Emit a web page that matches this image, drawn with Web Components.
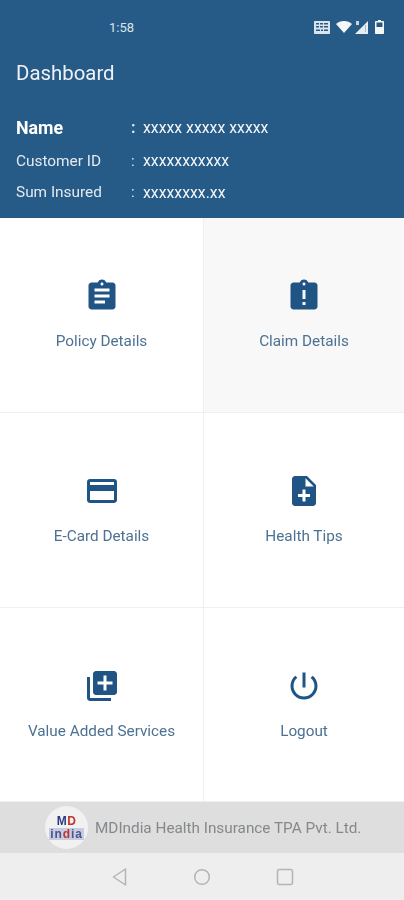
<!DOCTYPE html>
<html>
<head>
<meta charset="utf-8">
<title>Dashboard</title>
<style>
  html, body { margin: 0; padding: 0; height: 100%; overflow: hidden; }
  body { font-family: Roboto, "Liberation Sans", sans-serif; background: #fff; }
</style>
</head>
<body>
<app-screen>
  <app-header slot="top">
    <info-row label="Name" value="xxxxx xxxxx xxxxx" main></info-row>
    <info-row label="Customer ID" value="xxxxxxxxxxx"></info-row>
    <info-row label="Sum Insured" value="xxxxxxxx.xx"></info-row>
  </app-header>
  <dash-tile label="Policy Details" icon="policy"></dash-tile>
  <dash-tile label="Claim Details" icon="claim" active></dash-tile>
  <dash-tile label="E-Card Details" icon="card"></dash-tile>
  <dash-tile label="Health Tips" icon="tips"></dash-tile>
  <dash-tile label="Value Added Services" icon="services"></dash-tile>
  <dash-tile label="Logout" icon="logout"></dash-tile>
  <app-footer slot="bottom">MDIndia Health Insurance TPA Pvt. Ltd.</app-footer>
  <nav-bar slot="bottom"></nav-bar>
</app-screen>

<script>
const ICONS = {
  policy: 'M19 3h-4.18C14.4 1.84 13.3 1 12 1c-1.3 0-2.4.84-2.82 2H5c-1.1 0-2 .9-2 2v14c0 1.1.9 2 2 2h14c1.1 0 2-.9 2-2V5c0-1.1-.9-2-2-2zm-7 0c.55 0 1 .45 1 1s-.45 1-1 1-1-.45-1-1 .45-1 1-1zm2 14H7v-2h7v2zm3-4H7v-2h10v2zm0-4H7V7h10v2z',
  claim: 'M19 3h-4.18C14.4 1.84 13.3 1 12 1c-1.3 0-2.4.84-2.82 2H5c-1.1 0-2 .9-2 2v14c0 1.1.9 2 2 2h14c1.1 0 2-.9 2-2V5c0-1.1-.9-2-2-2zm-6 15h-2v-2h2v2zm0-4h-2V8h2v6zm-1-9c-.55 0-1-.45-1-1s.45-1 1-1 1 .45 1 1-.45 1-1 1z',
  card: 'M20 4H4c-1.11 0-1.99.89-1.99 2L2 18c0 1.11.89 2 2 2h16c1.11 0 2-.89 2-2V6c0-1.11-.89-2-2-2zm0 14H4v-6h16v6zm0-10H4V6h16v2z',
  tips: 'M14 2H6c-1.1 0-1.99.9-1.99 2L4 20c0 1.1.89 2 1.99 2H18c1.1 0 2-.9 2-2V8l-6-6zm2 14h-3v3h-2v-3H8v-2h3v-3h2v3h3v2zm-3-7V3.5L18.5 9H13z',
  services: 'M4 6H2v14c0 1.1.9 2 2 2h14v-2H4V6zm16-4H8c-1.1 0-2 .9-2 2v12c0 1.1.9 2 2 2h12c1.1 0 2-.9 2-2V4c0-1.1-.9-2-2-2zm-1 9h-4v4h-2v-4H9V9h4V5h2v4h4v2z',
  logout: 'M13 3h-2v10h2V3zm4.83 2.17l-1.42 1.42C17.99 7.86 19 9.81 19 12c0 3.87-3.13 7-7 7s-7-3.13-7-7c0-2.19 1.01-4.14 2.58-5.42L6.17 5.17C4.23 6.82 3 9.26 3 12c0 4.97 4.03 9 9 9s9-4.03 9-9c0-2.74-1.23-5.18-3.17-6.83z'
};

class AppScreen extends HTMLElement {
  constructor() {
    super();
    this.attachShadow({ mode: 'open' });
    this.shadowRoot.innerHTML = `
      <style>
        /* the reference is a soft, rescaled capture */
        :host { display: flex; flex-direction: column; height: 900px; filter: blur(.35px); }
        #tiles {
          flex: 1;
          display: grid;
          grid-template-columns: 204px 200px;
          grid-template-rows: 195px 195px 194px;
        }
      </style>
      <slot name="top"></slot>
      <section id="tiles"><slot></slot></section>
      <slot name="bottom"></slot>
    `;
  }
}

class AppHeader extends HTMLElement {
  constructor() {
    super();
    this.attachShadow({ mode: 'open' });
    this.shadowRoot.innerHTML = `
      <style>
        :host { display: block; height: 218px; background: #265a87; color: #f2f5f8; }
        #status {
          height: 54px;
          display: flex;
          align-items: center;
          padding-left: 109px;
          padding-right: 20px;
          font-size: 13px;
          color: #dbe4ec;
          box-sizing: border-box;
        }
        #time { flex: 1; }
        #status svg { display: block; }
        #status-icons { display: flex; align-items: center; gap: 3px; }
        h1 {
          margin: 0;
          padding-left: 16px;
          font-size: 20.400px;
          font-weight: 400;
          line-height: 38px;
          color: #eef2f6;
        }
        #info { padding: 18px 0 0 16px; }
      </style>
      <div id="status">
        <span id="time">1:58</span>
        <span id="status-icons">
          <svg width="16" height="13" viewBox="0 0 16 13"><path fill="#dbe4ec" fill-rule="evenodd" d="M1 0h14c.6 0 1 .4 1 1v11c0 .6-.4 1-1 1H1c-.6 0-1-.4-1-1V1c0-.6.4-1 1-1zm1 2v1.500h3V2zm4 0v1.500h3V2zm4 0v1.500h4V2zM2 5v1.500h3V5zm4 0v1.500h3V5zm4 0v1.500h4V5zM2 8.500V10h4V8.500zm5 0V10h2V8.500zm3 0V10h4V8.500z"/></svg>
          <svg width="16" height="12" viewBox="0 0 16 12" style="margin-left:3px"><path fill="#f4f6f8" d="M8 12L0 3C2 1.200 4.800 0 8 0s6 1.200 8 3z"/></svg>
          <svg width="14" height="13" viewBox="0 0 14 13"><path fill="#e8edf2" d="M13 0v13H0z"/><path fill="#265a87" d="M10 4h1v7h-1z" opacity=".35"/><path fill="#c6d3df" d="M1 0h3v4H1z"/></svg>
          <svg width="9" height="14" viewBox="0 0 9 14" style="margin-left:3px"><path fill="#f4f6f8" fill-rule="evenodd" d="M3 0h3v1h2c.6 0 1 .4 1 1v11c0 .6-.4 1-1 1H1c-.6 0-1-.4-1-1V2c0-.6.4-1 1-1h2zM1.500 2.500V7h6V2.500z"/></svg>
        </span>
      </div>
      <h1>Dashboard</h1>
      <div id="info"><slot></slot></div>
    `;
  }
}

class InfoRow extends HTMLElement {
  constructor() {
    super();
    this.attachShadow({ mode: 'open' });
    this.shadowRoot.innerHTML = `
      <style>
        :host { display: grid; grid-template-columns: 115px 12px 1fr; align-items: center; height: 31.500px; font-size: 15.400px; }
        :host([main]) { height: 35px; }
        :host([main]) #label { font-size: 17.800px; font-weight: 700; color: #fff; }
        :host([main]) #sep { font-weight: 700; font-size: 16px; }
        #label { color: #e4eaf0; }
        #sep { color: #dfe6ed; }
        #value { font-size: 15.800px; color: #f2f5f8; }
      </style>
      <span id="label"></span>
      <span id="sep">:</span>
      <span id="value"></span>
    `;
  }
  connectedCallback() {
    this.shadowRoot.querySelector('#label').textContent = this.getAttribute('label');
    this.shadowRoot.querySelector('#value').textContent = this.getAttribute('value');
  }
}

class DashTile extends HTMLElement {
  constructor() {
    super();
    this.attachShadow({ mode: 'open' });
    this.shadowRoot.innerHTML = `
      <style>
        :host {
          display: flex;
          flex-direction: column;
          align-items: center;
          box-sizing: border-box;
          padding-top: 60px;
          background: #fff;
          border-right: 1px solid #efefef;
          border-bottom: 1px solid #efefef;
        }
        :host([active]) { background: #f8f8f8; }
        :host(:nth-child(odd)) { border-right: 0; }
        svg { width: 36px; height: 36px; fill: #1f5484; display: block; }
        span { margin-top: 17px; font-size: 15.300px; line-height: 20px; color: #4c7193; white-space: nowrap; }
      </style>
      <svg viewBox="0 0 24 24"><path></path></svg>
      <span></span>
    `;
  }
  connectedCallback() {
    this.shadowRoot.querySelector('path').setAttribute('d', ICONS[this.getAttribute('icon')]);
    this.shadowRoot.querySelector('span').textContent = this.getAttribute('label');
  }
}

class AppFooter extends HTMLElement {
  constructor() {
    super();
    this.attachShadow({ mode: 'open' });
    this.shadowRoot.innerHTML = `
      <style>
        :host {
          display: flex;
          align-items: center;
          height: 51px;
          padding-left: 45px;
          gap: 7px;
          background: #dedede;
          font-size: 15.300px;
          color: #85888b;
        }
        #logo {
          width: 43px;
          height: 43px;
          border-radius: 50%;
          background: #f1f1f1;
          display: flex;
          flex-direction: column;
          align-items: center;
          justify-content: center;
          gap: 1px;
          font-family: "Liberation Sans", sans-serif;
          font-weight: 700;
          line-height: 1;
        }
        #md { font-size: 12px; letter-spacing: .5px; color: #2b3a80; }
        #md b { color: #c0342f; }
        #india {
          font-size: 12px;
          line-height: 12px;
          padding: 0 1px;
          color: #46548f;
          background: #c9cce0;
          letter-spacing: .9px;
        }
        #india b { color: #c0342f; }
      </style>
      <div id="logo">
        <span id="md">M<b>D</b></span>
        <span id="india">in<b>d</b>ia</span>
      </div>
      <slot></slot>
    `;
  }
}

class NavBar extends HTMLElement {
  constructor() {
    super();
    this.attachShadow({ mode: 'open' });
    this.shadowRoot.innerHTML = `
      <style>
        :host {
          display: flex;
          justify-content: center;
          align-items: center;
          gap: 59px;
          height: 47px;
          background: #eeeeee;
        }
        svg { width: 24px; height: 24px; fill: none; stroke: #b4b4b4; stroke-width: 1.500; display: block; }
      </style>
      <svg viewBox="0 0 24 24"><path d="M18.500 4v16L6.500 12z" stroke-linejoin="round"/></svg>
      <svg viewBox="0 0 24 24"><circle cx="12" cy="12" r="7.300"/></svg>
      <svg viewBox="0 0 24 24"><rect x="4.500" y="4.500" width="15" height="15" rx="2"/></svg>
    `;
  }
}

customElements.define('app-screen', AppScreen);
customElements.define('app-header', AppHeader);
customElements.define('info-row', InfoRow);
customElements.define('dash-tile', DashTile);
customElements.define('app-footer', AppFooter);
customElements.define('nav-bar', NavBar);
</script>
</body>
</html>
